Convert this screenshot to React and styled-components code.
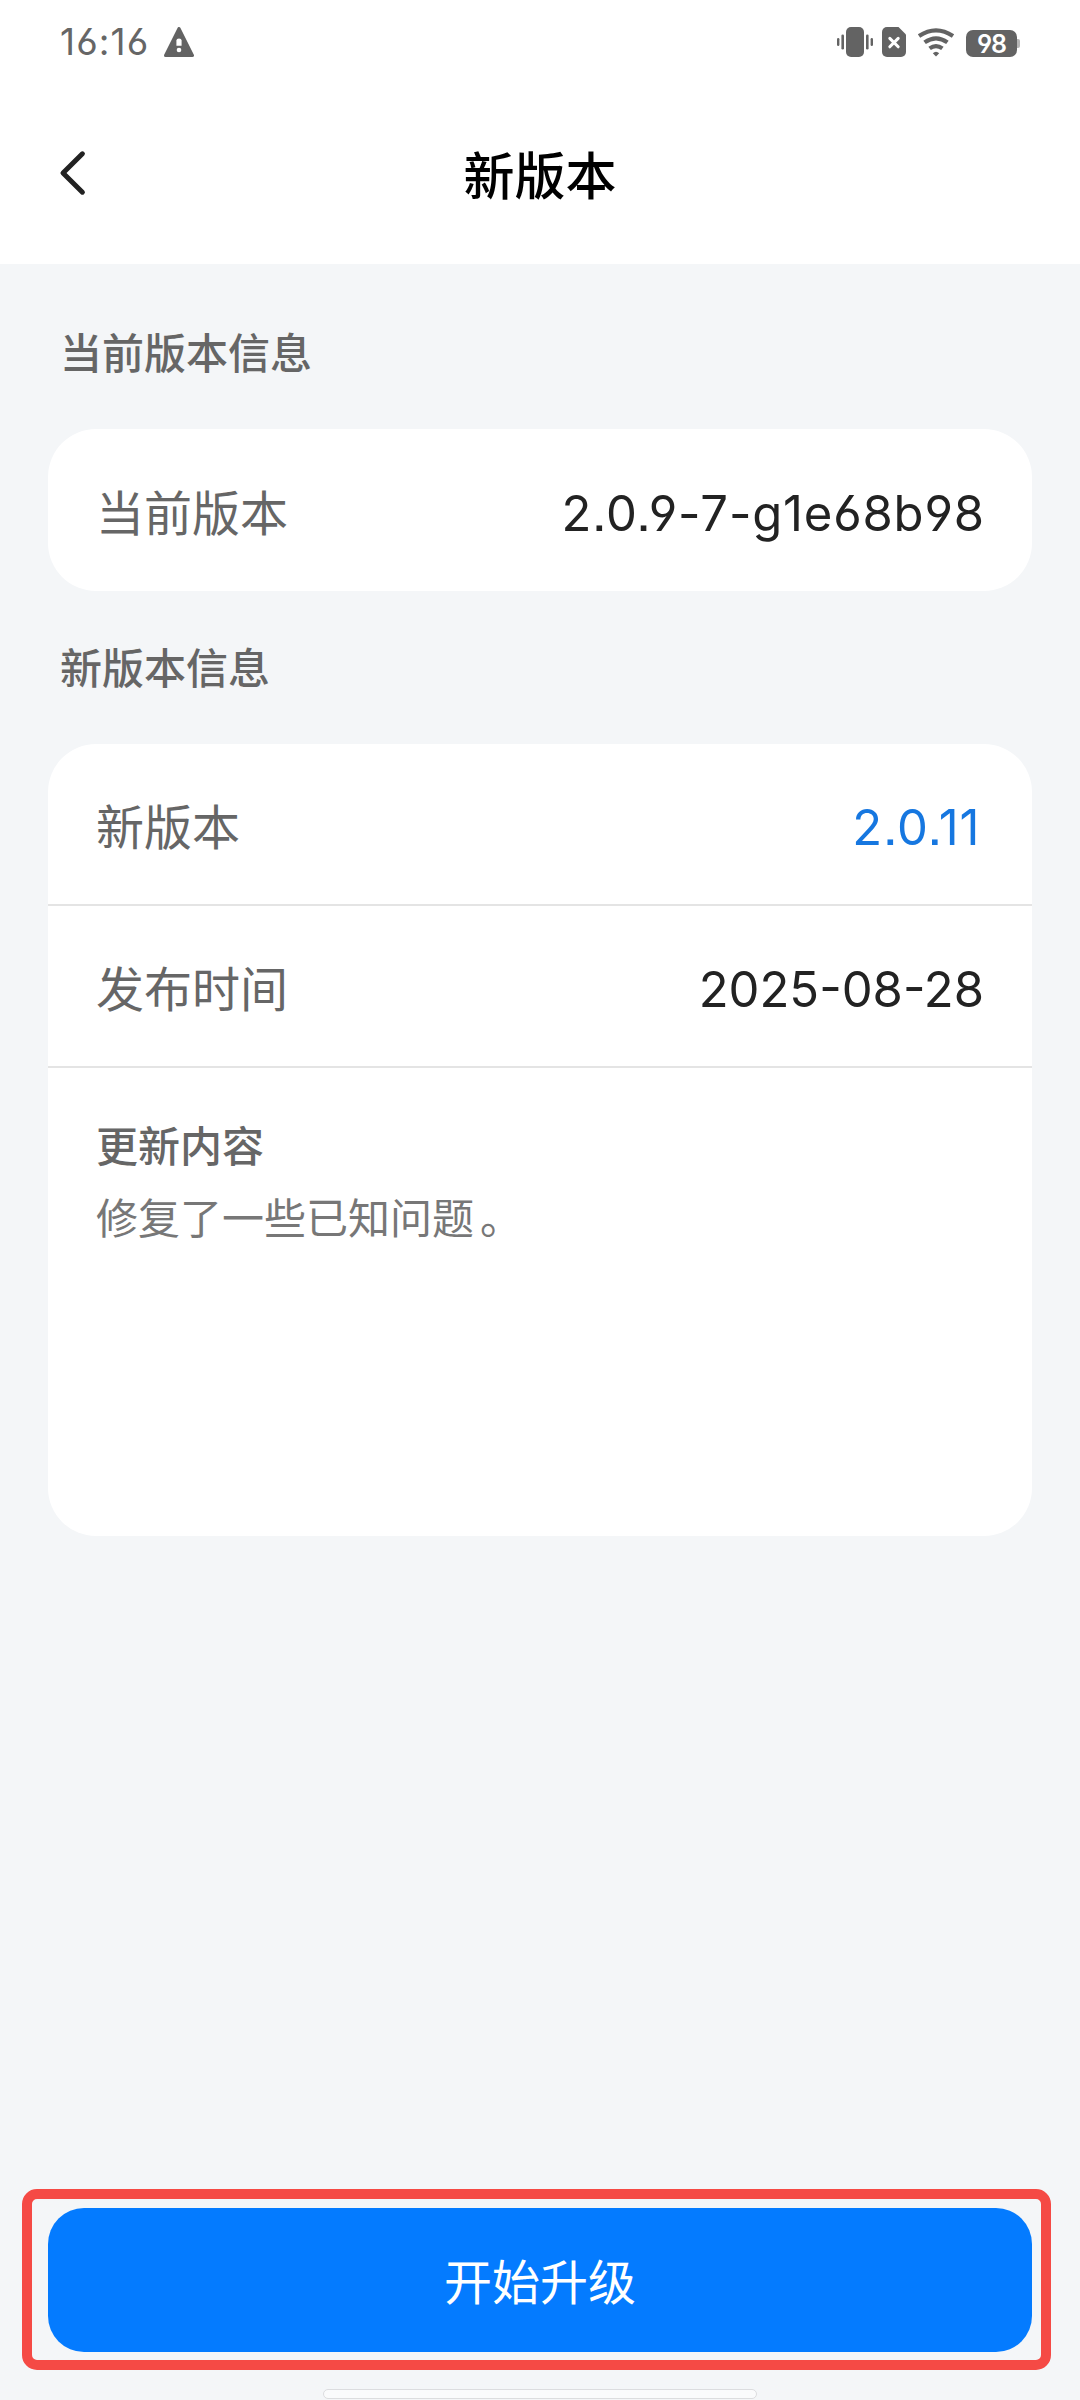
import React from "react";
import styled, { createGlobalStyle } from "styled-components";

const GlobalStyle = createGlobalStyle`
  * { box-sizing: border-box; }
  body { margin: 0; background: #f4f6f8; }
`;

const latin = `Inter, "Noto Sans CJK SC", sans-serif`;

const Screen = styled.div`
  width: 1080px;
  height: 2400px;
  display: flex;
  flex-direction: column;
  background: #f4f6f8;
  font-family: "Noto Sans CJK SC", sans-serif;
  overflow: hidden;
`;

const Header = styled.header`
  height: 264px;
  flex: none;
  background: #fff;
`;

const StatusBar = styled.div`
  height: 84px;
  padding: 0 60px;
  display: flex;
  align-items: center;
  justify-content: space-between;
`;

const StatusGroup = styled.div`
  display: flex;
  align-items: center;
  gap: ${(p) => p.$gap}px;
`;

const Clock = styled.span`
  width: 90px;
  font: 400 37px/44px ${latin};
  font-feature-settings: "cv03", "cv04";
  letter-spacing: 1.1px;
  color: #666;
  white-space: nowrap;
`;

const Battery = styled.div`
  width: 51px;
  height: 27px;
  margin-top: 3px;
  margin-right: 3px;
  border-radius: 7px;
  background: #636363;
  color: #fff;
  font: 600 25px/28px ${latin};
  font-feature-settings: "cv03", "cv04";
  letter-spacing: -1px;
  text-align: center;
  position: relative;

  &::after {
    content: "";
    position: absolute;
    left: 51px;
    top: 9px;
    width: 3px;
    height: 9px;
    border-radius: 0 2px 2px 0;
    background: #b5b5b5;
  }
`;

const NavBar = styled.nav`
  height: 180px;
  padding: 0 58px;
  display: grid;
  grid-template-columns: 60px 1fr 60px;
  align-items: start;
`;

const BackButton = styled.button`
  width: 60px;
  height: 48px;
  margin-top: 65px;
  padding: 0;
  border: 0;
  background: none;
  display: flex;
`;

const Title = styled.h1`
  margin: 52px 0 0;
  font-size: 51px;
  line-height: 74px;
  font-weight: 500;
  text-align: center;
  color: #000;
`;

const SectionTitle = styled.h2`
  flex: none;
  margin: 0;
  padding-left: 60px;
  height: ${(p) => p.$height}px;
  padding-top: ${(p) => p.$top}px;
  font-size: 42px;
  line-height: 60px;
  font-weight: 500;
  color: #666;
`;

const Card = styled.section`
  flex: none;
  margin: 0 48px;
  height: ${(p) => p.$height}px;
  border-radius: 48px;
  background: #fff;
  overflow: hidden;
`;

const Row = styled.div`
  height: 162px;
  padding: 0 48px;
  display: flex;
  align-items: center;
  justify-content: space-between;
  border-bottom: ${(p) => (p.$divided ? "2px solid #e4e4e4" : "0")};
`;

const Label = styled.span`
  font-size: 48px;
  line-height: 70px;
  color: #666;
`;

const Value = styled.span`
  padding-top: 8px;
  font: 400 49px/70px ${latin};
  font-feature-settings: "cv03", "cv04", "ss07";
  letter-spacing: ${(p) => p.$tracking}px;
  margin-right: ${(p) => (p.$accent ? 3.5 : -p.$tracking)}px;
  color: ${(p) => (p.$accent ? "#1677e0" : "#222")};
`;

const Notes = styled.div`
  padding: 46px 48px;
`;

const NotesTitle = styled.h3`
  margin: 0;
  font-size: 42px;
  line-height: 60px;
  font-weight: 500;
  color: #666;
`;

const NotesText = styled.p`
  margin: 12px 0 0;
  font-size: 42px;
  line-height: 60px;
  color: #777;
`;

const FullStop = styled.span`
  margin-left: 6px;
`;

const Footer = styled.footer`
  margin-top: auto;
  height: 211px;
  flex: none;
  padding: 0 29px 0 22px;
  display: flex;
  flex-direction: column;
`;

const Highlight = styled.div`
  height: 181px;
  padding: 9px 9px 8px 16px;
  border: 10px solid #f54a45;
  border-radius: 15px;
`;

const UpgradeButton = styled.button`
  display: block;
  width: 100%;
  height: 144px;
  padding: 0 0 2px;
  border: 0;
  border-radius: 36px;
  background: #047bff;
  color: #fff;
  font: 400 48px/142px "Noto Sans CJK SC", sans-serif;
`;

const HomeIndicator = styled.div`
  width: 434px;
  height: 10px;
  margin: 19px 0 0 301px;
  border: 1px solid #dcdddf;
  border-radius: 5px;
  background: #fafbfc;
`;

const VibrateSvg = styled.svg`
  margin-right: -2px;
`;

const WarningIcon = () => (
  <svg width="30" height="30" viewBox="0 0 30 30">
    <path d="M15 1.5 28.5 28.5H1.5Z" fill="#636363" stroke="#636363" strokeWidth="3" strokeLinejoin="round" />
    <path d="M12.4 13.6Q12.4 11.6 15 11.6T17.6 13.6V18.8H12.4Z" fill="#fff" />
    <circle cx="15" cy="23" r="2.3" fill="#fff" />
  </svg>
);

const VibrateIcon = () => (
  <VibrateSvg width="36" height="30" viewBox="0 0 36 30" fill="#636363">
    <rect x="9" y="0" width="18" height="30" rx="5" />
    <rect x="0" y="11" width="2.4" height="8" rx="1.2" />
    <rect x="4.4" y="7.5" width="2.6" height="15" rx="1.3" />
    <rect x="29" y="7.5" width="2.6" height="15" rx="1.3" />
    <rect x="33.6" y="11" width="2.4" height="8" rx="1.2" />
  </VibrateSvg>
);

const SimIcon = () => (
  <svg width="24" height="30" viewBox="0 0 24 30">
    <path d="M5 0h11.5L24 7.5V25a5 5 0 0 1-5 5H5a5 5 0 0 1-5-5V5a5 5 0 0 1 5-5Z" fill="#636363" />
    <path d="m7.8 11.4 8.4 8.4m0-8.4-8.4 8.4" stroke="#fff" strokeWidth="3" strokeLinecap="round" />
  </svg>
);

const WifiIcon = () => (
  <svg width="38" height="30" viewBox="0 0 38 30" fill="none" stroke="#636363" strokeWidth="4.2">
    <path d="M2 9Q19-2.4 36 9" />
    <path d="M7.6 15.4Q19 7.2 30.4 15.4" />
    <path d="M12.6 21.4Q19 16.8 25.4 21.4" />
    <path d="M15.8 26.2Q19 23.2 22.2 26.2L19 29.6Z" fill="#636363" stroke="none" />
  </svg>
);

const BackIcon = () => (
  <svg width="30" height="48" viewBox="0 0 30 48" fill="none">
    <path d="M24.4 4.8 5 24 24.4 43.2" stroke="#222" strokeWidth="5" strokeLinecap="round" strokeLinejoin="round" />
  </svg>
);

export default function App() {
  return (
    <Screen>
      <GlobalStyle />
      <Header>
        <StatusBar>
          <StatusGroup $gap={14}>
            <Clock>16:16</Clock>
            <WarningIcon />
          </StatusGroup>
          <StatusGroup $gap={11}>
            <VibrateIcon />
            <SimIcon />
            <WifiIcon />
            <Battery>98</Battery>
          </StatusGroup>
        </StatusBar>
        <NavBar>
          <BackButton aria-label="返回">
            <BackIcon />
          </BackButton>
          <Title>新版本</Title>
        </NavBar>
      </Header>

      <SectionTitle $height={165} $top={57}>当前版本信息</SectionTitle>
      <Card $height={162}>
        <Row>
          <Label>当前版本</Label>
          <Value $tracking={0.8}>2.0.9-7-g1e68b98</Value>
        </Row>
      </Card>

      <SectionTitle $height={153} $top={45}>新版本信息</SectionTitle>
      <Card $height={792}>
        <Row $divided>
          <Label>新版本</Label>
          <Value $accent $tracking={1}>2.0.11</Value>
        </Row>
        <Row $divided>
          <Label>发布时间</Label>
          <Value $tracking={0}>2025-08-28</Value>
        </Row>
        <Notes>
          <NotesTitle>更新内容</NotesTitle>
          <NotesText>修复了一些已知问题<FullStop>。</FullStop></NotesText>
        </Notes>
      </Card>

      <Footer>
        <Highlight>
          <UpgradeButton>开始升级</UpgradeButton>
        </Highlight>
        <HomeIndicator />
      </Footer>
    </Screen>
  );
}
